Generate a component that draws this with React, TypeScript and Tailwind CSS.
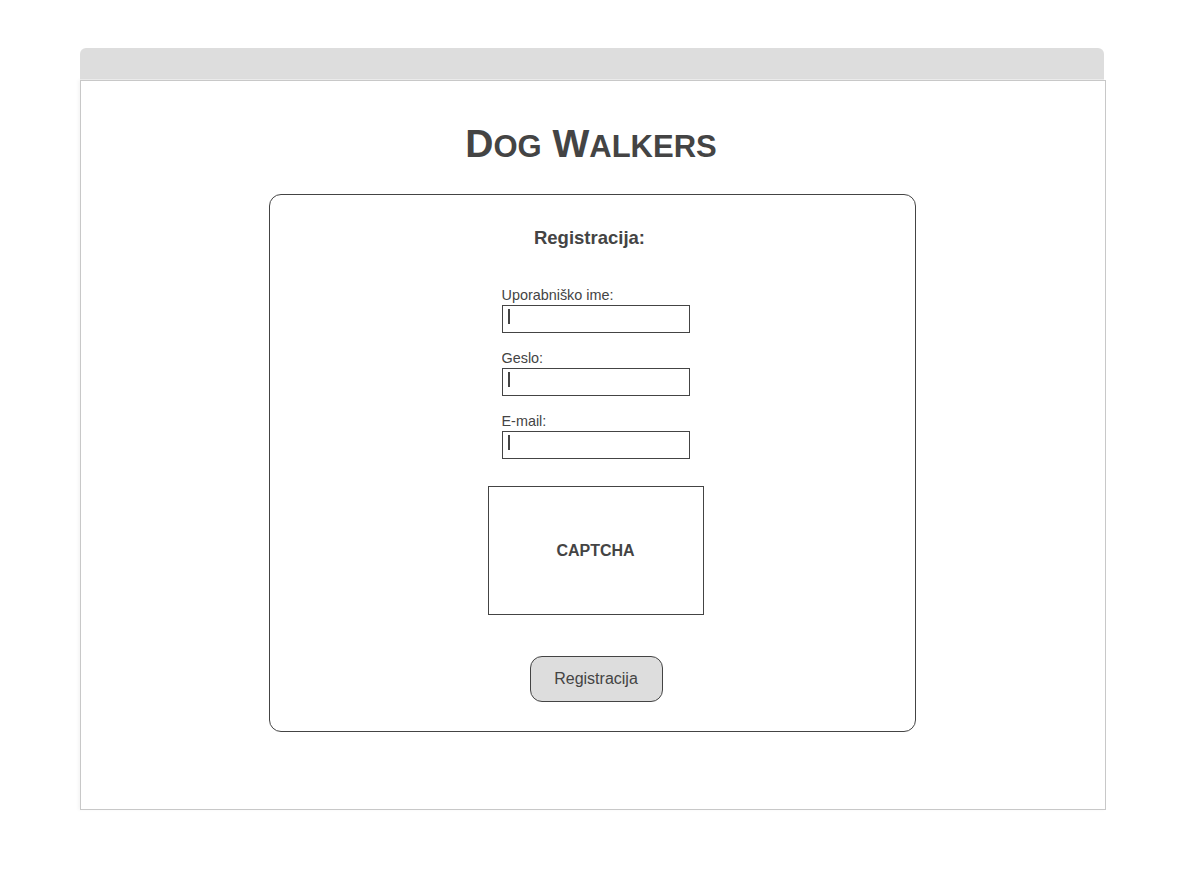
export default function App() {
  const fields = ['Uporabniško ime:', 'Geslo:', 'E-mail:']

  return (
    <div className="h-[888px] w-full bg-white pt-[48px] pl-[80px] font-['Liberation_Sans',Arial,sans-serif] text-[#444444]">
      <div className="h-[31px] w-[1024px] rounded-t-[6px] bg-[#dddddd]" />
      <div className="h-[1px] w-[1024px] bg-[#eeeeee]" />
      <div className="flex h-[730px] w-[1026px] flex-col border border-[#c8c8c8] shadow-[-2px_0_3px_rgba(0,0,0,0.04)]">
        <h1 className="mt-[43px] self-center pr-[4px] text-[39px] leading-[40px] font-bold">
          D<span className="text-[31px]">OG</span> W<span className="text-[31px]">ALKERS</span>
        </h1>
        <div className="mt-[27px] ml-[188px] flex h-[538px] w-[647px] flex-col items-center rounded-[12px] border border-[#444444] pt-[34px]">
          <div className="-ml-[6px] text-[18.5px] leading-[18px] font-bold">Registracija:</div>
          <div className="mt-[40px] ml-[6px] flex flex-col items-center">
            <div className="flex flex-col gap-[17px]">
              {fields.map((f) => (
                <div key={f} className="flex flex-col">
                  <div className="h-[18px] overflow-hidden text-[14.4px] leading-[16px]">{f}</div>
                  <div className="flex h-[28px] w-[188px] items-start border border-[#444444] bg-white pl-[5px] pt-[3px]">
                    <div className="h-[15px] w-[2px] bg-[#444444]" />
                  </div>
                </div>
              ))}
            </div>
            <div className="mt-[27px] flex h-[129px] w-[216px] items-center justify-center border border-[#444444] text-[16px] font-bold">
              CAPTCHA
            </div>
            <button
              type="button"
              className="mt-[41px] ml-[1px] h-[46px] w-[133px] rounded-[12px] border border-[#444444] bg-[#dddddd] text-[16px]"
            >
              Registracija
            </button>
          </div>
        </div>
      </div>
    </div>
  )
}
